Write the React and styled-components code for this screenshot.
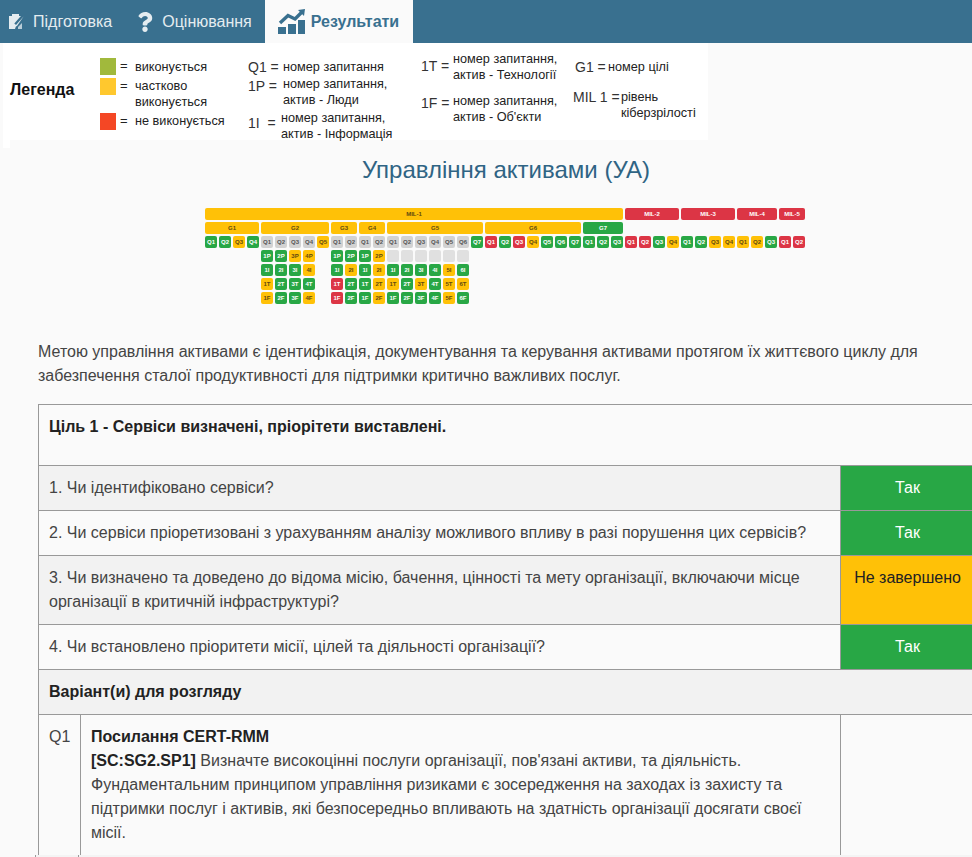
import styled, { createGlobalStyle } from 'styled-components';
import { FaQuestion } from 'react-icons/fa';

const GlobalStyle = createGlobalStyle`
  html, body {
    margin: 0;
    height: 857px;
    overflow: hidden;
    background: #fafafa;
    font-family: "Liberation Sans", Arial, sans-serif;
    font-size: 16px;
    color: #444;
  }
`;

const tileColors = {
  g: ['#28a745', '#fff'],
  y: ['#ffc107', '#5f4a10'],
  r: ['#dc3545', '#fff'],
  n: ['#d2d2d2', '#555'],
  e: ['#e0e0e0', 'transparent'],
};

const milRow = [
  ['MIL-1', 30, 'y'],
  ['MIL-2', 4, 'r'],
  ['MIL-3', 4, 'r'],
  ['MIL-4', 3, 'r'],
  ['MIL-5', 2, 'r'],
];
const goalRow = [
  ['G1', 4, 'y'],
  ['G2', 5, 'y'],
  ['G3', 2, 'y'],
  ['G4', 2, 'y'],
  ['G5', 7, 'y'],
  ['G6', 7, 'y'],
  ['G7', 3, 'g'],
];
const questionRow = ['ggyg', 'nnnny', 'nn', 'nn', 'nnnnnng', 'rgryggg', 'ggg', 'rrgy', 'ggyy', 'yyg', 'rr'];
const assetRows = [
  { suffix: 'P', groups: ['____', 'ggyy_', 'gg', 'gy', 'eeeeee_'] },
  { suffix: 'I', groups: ['____', 'gggy_', 'gy', 'gy', 'ggggyg_'] },
  { suffix: 'T', groups: ['____', 'yggg_', 'rg', 'gy', 'ygygyy_'] },
  { suffix: 'F', groups: ['____', 'yggy_', 'rg', 'gy', 'ggggyg_'] },
];

const Page = styled.div`
  width: 972px;
  height: 857px;
  overflow: hidden;
`;

const Nav = styled.nav`
  display: flex;
  height: 43px;
  background: #39708f;
`;

const Tab = styled.div`
  display: flex;
  align-items: center;
  gap: ${(p) => p.$gap}px;
  padding: ${(p) => (p.$active ? '0 14px 0 13px' : `0 ${p.$right}px 0 ${p.$left}px`)};
  background: ${(p) => (p.$active ? '#fafafa' : 'transparent')};
  color: ${(p) => (p.$active ? '#39708f' : '#e4ecf0')};
  font-weight: ${(p) => (p.$active ? 'bold' : 'normal')};
  font-size: 16px;
`;

const Legend = styled.section`
  display: flex;
  width: 705px;
  height: 97px;
  margin-left: 3px;
  background: #fff;
  color: #222;
  font-size: 12.7px;
  line-height: 16px;
`;

const LegendTail = styled.div`
  width: 7px;
  height: 8px;
  margin-left: 3px;
  background: #fff;
`;

const LegendTitle = styled.strong`
  flex: none;
  width: 97px;
  box-sizing: border-box;
  padding: 38px 0 0 7px;
  font-size: 16px;
  line-height: 18px;
  color: #111;
`;

const LegendColumn = styled.div`
  display: flex;
  flex-direction: column;
  flex: none;
  width: ${(p) => p.$width}px;
  padding-top: ${(p) => p.$top}px;
`;

const LegendEntry = styled.div`
  display: flex;
  margin-top: ${(p) => p.$top || 0}px;
`;

const Swatch = styled.i`
  display: block;
  flex: none;
  width: 16px;
  height: 17px;
  background: ${(p) => p.$color};
`;

const Equals = styled.span`
  flex: none;
  width: 15px;
  margin-left: 4px;
  font-size: 13px;
`;

const LegendKey = styled.span`
  flex: none;
  box-sizing: border-box;
  width: ${(p) => p.$width}px;
  padding-top: ${(p) => p.$drop || 0}px;
  padding-left: ${(p) => p.$indent || 0}px;
  font-size: 14px;
  color: #333;
  white-space: nowrap;
`;

const LegendText = styled.span`
  padding-top: ${(p) => p.$drop || 0}px;
  white-space: nowrap;
`;

const Content = styled.main`
  width: 936px;
  padding-left: 38px;
`;

const Title = styled.h2`
  margin: 7px 0 24px;
  text-align: center;
  font-size: 24px;
  line-height: 29px;
  font-weight: normal;
  color: #2f6484;
`;

const Tiles = styled.div`
  display: grid;
  grid-template-columns: repeat(43, 12px);
  grid-auto-rows: 12px;
  gap: 2px;
  width: 600px;
  margin: 0 0 36px 167px;
`;

const Tile = styled.div`
  grid-column: span ${(p) => p.$span || 1};
  display: flex;
  align-items: center;
  justify-content: center;
  border-radius: 2px;
  background: ${(p) => tileColors[p.$kind][0]};
  color: ${(p) => tileColors[p.$kind][1]};
  font-size: 6px;
  font-weight: bold;
  line-height: 12px;
  white-space: nowrap;
`;

const Gap = styled.div`
  grid-column: span ${(p) => p.$span || 1};
`;

const Intro = styled.p`
  margin: 0 0 16px;
  line-height: 24px;
`;

const Table = styled.table`
  width: 936px;
  table-layout: fixed;
  border-collapse: collapse;

  tr:last-child td {
    border-bottom: none;
  }
`;

const Cell = styled.td`
  border: 1px solid #999;
  padding: ${(p) => (p.$tall ? '10px 10px 26px' : '10px')};
  line-height: 24px;
  vertical-align: top;
  background: ${(p) => (p.$shade ? '#f2f2f2' : '#fafafa')};
  font-weight: ${(p) => (p.$bold ? 'bold' : 'normal')};
  color: ${(p) => (p.$bold ? '#222' : '#444')};
`;

const Status = styled.td`
  border: 1px solid #999;
  padding: 10px;
  line-height: 24px;
  vertical-align: top;
  text-align: center;
  background: ${(p) => (p.$done ? '#28a745' : '#ffc107')};
  color: ${(p) => (p.$done ? '#fff' : '#222')};
`;

const Bold = styled.strong`
  color: #222;
`;

const BottomStrip = styled.div`
  display: flex;
  width: 940px;
  height: 2px;
  margin-left: -3px;
  background: #f4f4f4;
`;

const StripCell = styled.div`
  width: 42px;
  border-left: 1px solid #999;
`;

const NoteIcon = () => (
  <svg width="15" height="16" viewBox="0 0 15 16">
    <path d="M0 2h3V0h7v2h3l0 3-6 7-1 3H0z" fill="#e4ecf0" />
    <path d="M14 2 L6.500 10.500" stroke="#39708f" strokeWidth="3.200" />
    <path d="M14.500 2.500 L7 11 L5.500 13 L8 12 Z" fill="#e4ecf0" />
    <path d="M9 15h4V9l-4 4z" fill="#b9cdd8" />
  </svg>
);

const ChartIcon = () => (
  <svg width="28" height="26" viewBox="0 0 28 26">
    <path d="M0 18h8v7H0zM10 15h8v10h-8zM20 11h7v14h-7z" fill="#39708f" />
    <path d="M2 14 L10 6.500 L17 10 L24 3" fill="none" stroke="#39708f" strokeWidth="3.400" />
    <path d="M20 1 L27 0 L26 7 Z" fill="#39708f" />
  </svg>
);

const groupTiles = (groups, suffix) =>
  groups.flatMap((group, g) =>
    [...group].map((kind, i) => {
      const key = `${suffix}-${g}-${i}`;
      if (kind === '_') return <Gap key={key} />;
      const label = suffix === 'Q' ? `Q${i + 1}` : `${i + 1}${suffix}`;
      return (
        <Tile key={key} $kind={kind}>
          {kind === 'e' ? '' : label}
        </Tile>
      );
    })
  );

const GridRow = ({ row }) => (
  <>
    {groupTiles(row.groups, row.suffix)}
    <Gap $span={23} />
  </>
);

const App = () => {
  return (
    <Page>
      <GlobalStyle />
      <Nav>
        <Tab $left={9} $right={13} $gap={9}>
          <NoteIcon />
          Підготовка
        </Tab>
        <Tab $left={10} $right={13} $gap={7}>
          <FaQuestion size={20} />
          Оцінювання
        </Tab>
        <Tab $active $gap={5}>
          <ChartIcon />
          Результати
        </Tab>
      </Nav>

      <Legend>
        <LegendTitle>Легенда</LegendTitle>
        <LegendColumn $width={148} $top={15}>
          <LegendEntry>
            <Swatch $color="#a1b93c" />
            <Equals>=</Equals>
            <LegendText $drop={1}>виконується</LegendText>
          </LegendEntry>
          <LegendEntry $top={3}>
            <Swatch $color="#ffc82e" />
            <Equals>=</Equals>
            <LegendText>
              частково
              <br />
              виконується
            </LegendText>
          </LegendEntry>
          <LegendEntry $top={3}>
            <Swatch $color="#f44725" />
            <Equals>=</Equals>
            <LegendText>не виконується</LegendText>
          </LegendEntry>
        </LegendColumn>
        <LegendColumn $width={173} $top={16}>
          <LegendEntry>
            <LegendKey $width={35}>Q1 =</LegendKey>
            <LegendText>номер запитання</LegendText>
          </LegendEntry>
          <LegendEntry $top={1}>
            <LegendKey $width={35} $drop={2}>1P =</LegendKey>
            <LegendText>
              номер запитання,
              <br />
              актив - Люди
            </LegendText>
          </LegendEntry>
          <LegendEntry $top={2}>
            <LegendKey $width={33} $drop={5}>1I&nbsp;&nbsp;=</LegendKey>
            <LegendText>
              номер запитання,
              <br />
              актив - Інформація
            </LegendText>
          </LegendEntry>
        </LegendColumn>
        <LegendColumn $width={152} $top={8}>
          <LegendEntry>
            <LegendKey $width={32} $drop={7}>1T =</LegendKey>
            <LegendText>
              номер запитання,
              <br />
              актив - Технології
            </LegendText>
          </LegendEntry>
          <LegendEntry $top={10}>
            <LegendKey $width={32} $drop={2}>1F =</LegendKey>
            <LegendText>
              номер запитання,
              <br />
              актив - Об'єкти
            </LegendText>
          </LegendEntry>
        </LegendColumn>
        <LegendColumn $width={130} $top={16}>
          <LegendEntry>
            <LegendKey $width={35} $indent={2}>G1 =</LegendKey>
            <LegendText>номер цілі</LegendText>
          </LegendEntry>
          <LegendEntry $top={14}>
            <LegendKey $width={48}>MIL 1 =</LegendKey>
            <LegendText>
              рівень
              <br />
              кіберзрілості
            </LegendText>
          </LegendEntry>
        </LegendColumn>
      </Legend>
      <LegendTail />

      <Content>
        <Title>Управління активами (УА)</Title>

        <Tiles>
          {milRow.map(([label, span, kind]) => (
            <Tile key={label} $span={span} $kind={kind}>
              {label}
            </Tile>
          ))}
          {goalRow.map(([label, span, kind]) => (
            <Tile key={label} $span={span} $kind={kind}>
              {label}
            </Tile>
          ))}
          <Gap $span={13} />
          {groupTiles(questionRow, 'Q')}
          {assetRows.map((row) => (
            <GridRow key={row.suffix} row={row} />
          ))}
        </Tiles>

        <Intro>
          Метою управління активами є ідентифікація, документування та керування активами протягом їх життєвого циклу для
          забезпечення сталої продуктивності для підтримки критично важливих послуг.
        </Intro>

        <Table>
          <colgroup>
            <col width="42" />
            <col width="760" />
            <col width="134" />
          </colgroup>
          <tbody>
            <tr>
              <Cell colSpan={3} $bold $tall>
                Ціль 1 - Сервіси визначені, пріорітети виставлені.
              </Cell>
            </tr>
            <tr>
              <Cell colSpan={2} $shade>1. Чи ідентифіковано сервіси?</Cell>
              <Status $done>Так</Status>
            </tr>
            <tr>
              <Cell colSpan={2}>
                2. Чи сервіси пріоретизовані з урахуванням аналізу можливого впливу в разі порушення цих сервісів?
              </Cell>
              <Status $done>Так</Status>
            </tr>
            <tr>
              <Cell colSpan={2} $shade>
                3. Чи визначено та доведено до відома місію, бачення, цінності та мету організації, включаючи місце
                організації в критичній інфраструктурі?
              </Cell>
              <Status>Не завершено</Status>
            </tr>
            <tr>
              <Cell colSpan={2}>4. Чи встановлено пріоритети місії, цілей та діяльності організації?</Cell>
              <Status $done>Так</Status>
            </tr>
            <tr>
              <Cell colSpan={3} $shade $bold>
                Варіант(и) для розгляду
              </Cell>
            </tr>
            <tr>
              <Cell>Q1</Cell>
              <Cell>
                <Bold>Посилання CERT-RMM</Bold>
                <br />
                <Bold>[SC:SG2.SP1]</Bold> Визначте високоцінні послуги організації, пов'язані активи, та діяльність.
                Фундаментальним принципом управління ризиками є зосередження на заходах із захисту та підтримки послуг і
                активів, які безпосередньо впливають на здатність організації досягати своєї місії.
              </Cell>
              <Cell />
            </tr>
          </tbody>
        </Table>
        <BottomStrip>
          <StripCell />
          <StripCell />
        </BottomStrip>
      </Content>
    </Page>
  );
};

export default App;
